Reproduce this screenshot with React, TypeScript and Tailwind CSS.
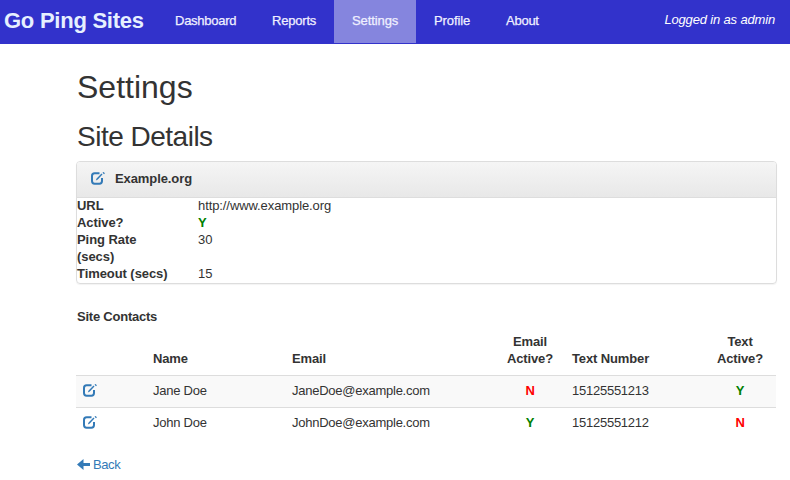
const EditIcon = () => (
  <svg width="14" height="13" viewBox="0 0 14 13" className="block shrink-0 text-[#337ab7]" fill="none" stroke="currentColor">
    <path d="M8.500 1.300H3.600Q1 1.300 1 3.900V9.100Q1 11.700 3.600 11.700H8.400Q11 11.700 11 9.100V6" strokeWidth="2" />
    <path d="M4.800 8.600L5.600 6.600 10.500 1.600 11.500 2.600 6.800 7.600z" fill="currentColor" stroke="none" />
    <path d="M11.500 .8l.6-.6q.4-.3.800 0l.7.7q.3.4 0 .8l-.600.600z" fill="currentColor" stroke="none" />
  </svg>
);

const ArrowLeft = () => (
  <svg width="13" height="11" viewBox="0 0 13 11" className="block text-[#337ab7]" fill="currentColor">
    <path d="M0 5.500L6.500 0V4H13v3H6.500v4z" />
  </svg>
);

const nav = [
  { label: 'Dashboard', cls: 'w-[97px] tracking-[-0.25px]' },
  { label: 'Reports', cls: 'w-[80px] tracking-[-0.2px]' },
  { label: 'Settings', cls: 'w-[82px] bg-[#8585de] tracking-[-0.1px]' },
  { label: 'Profile', cls: 'w-[72px] tracking-[-0.1px]' },
  { label: 'About', cls: 'w-[69px] tracking-[-0.25px]' },
];

const details = [
  { label: 'URL', value: 'http://www.example.org' },
  { label: 'Active?', value: 'Y' },
  { label: 'Ping Rate (secs)', value: '30' },
  { label: 'Timeout (secs)', value: '15' },
];

const contacts = [
  { name: 'Jane Doe', email: 'JaneDoe@example.com', emailOn: 'N', phone: '15125551213', textOn: 'Y', bg: 'bg-[#f9f9f9]' },
  { name: 'John Doe', email: 'JohnDoe@example.com', emailOn: 'Y', phone: '15125551212', textOn: 'N', bg: 'bg-white' },
];

const Flag = ({ value }: { value: string }) => (
  <span className={value === 'Y' ? 'font-bold text-[#008000]' : 'font-bold text-[#ff0000]'}>{value}</span>
);

const columns = 'grid grid-cols-[77px_139px_207px_73px_132px_72px]';

export default function App() {
  return (
    <div className="h-[480px] w-[790px] overflow-hidden bg-white font-['Liberation_Sans',Arial,sans-serif] text-[13px] leading-[17px] text-[#333]">
      <header className="flex h-11 bg-[#3232cb] text-[#f0f0ff]">
        <div className="w-[157px] whitespace-nowrap pl-[4px] pt-[7px] text-[22px] font-bold leading-[28px] tracking-[-0.25px] text-[#e6f0ff]">Go Ping Sites</div>
        <nav className="flex h-[43px]">
          {nav.map((n) => (
            <a key={n.label} className={`${n.cls} whitespace-nowrap pl-[18px] pt-3 [-webkit-text-stroke:0.25px]`}>{n.label}</a>
          ))}
        </nav>
        <div className="ml-auto pr-[15px] pt-[11px] italic tracking-[-0.16px] text-white">Logged in as admin</div>
      </header>
      <main className="ml-[76px] w-[701px]">
        <h1 className="pl-px pt-[25px] text-[32px] leading-9">Settings</h1>
        <h2 className="pl-px pt-[16px] text-[28px] leading-8 tracking-[-0.5px]">Site Details</h2>
        <section className="mt-[8px] h-[123px] rounded border border-[#ddd] shadow-[0_1px_1px_rgba(0,0,0,0.05)]">
          <div className="flex h-9 rounded-t-[3px] border-b border-[#ddd] bg-linear-to-b from-[#f5f5f5] to-[#e8e8e8] pl-[14px] pt-2">
            <span className="pt-[2px]"><EditIcon /></span>
            <b className="ml-[10px] tracking-[-0.09px]">Example.org</b>
          </div>
          <dl className="-mt-px">
            {details.map((d) => (
              <div key={d.label} className="flex">
                <dt className="w-[121px] pr-7 font-bold tracking-[-0.07px]">{d.label}</dt>
                <dd className="tracking-[-0.09px]">{d.value === 'Y' ? <Flag value="Y" /> : d.value}</dd>
              </div>
            ))}
          </dl>
        </section>
        <div className="mt-[24px] pl-px font-bold tracking-[-0.23px]">Site Contacts</div>
        <div className="w-[700px]">
          <div className={`${columns} h-[42px] items-end font-bold tracking-[-0.13px]`}>
            <span />
            <span>Name</span>
            <span>Email</span>
            <span className="pr-[11px] text-center">Email<br />Active?</span>
            <span>Text Number</span>
            <span className="text-center">Text<br />Active?</span>
          </div>
          <div className="h-2" />
          {contacts.map((c) => (
            <div key={c.name} className={`${columns} ${c.bg} h-8 border-t border-[#ddd] pt-[6px] tracking-[-0.25px]`}>
              <span className="pl-[7px] pt-[2px]"><EditIcon /></span>
              <span>{c.name}</span>
              <span>{c.email}</span>
              <span className="pr-[11px] text-center"><Flag value={c.emailOn} /></span>
              <span>{c.phone}</span>
              <span className="text-center"><Flag value={c.textOn} /></span>
            </div>
          ))}
        </div>
        <a className="mt-[17px] flex items-center gap-[3px] pl-px tracking-[-0.4px] text-[#337ab7]"><ArrowLeft />Back</a>
      </main>
    </div>
  );
}
